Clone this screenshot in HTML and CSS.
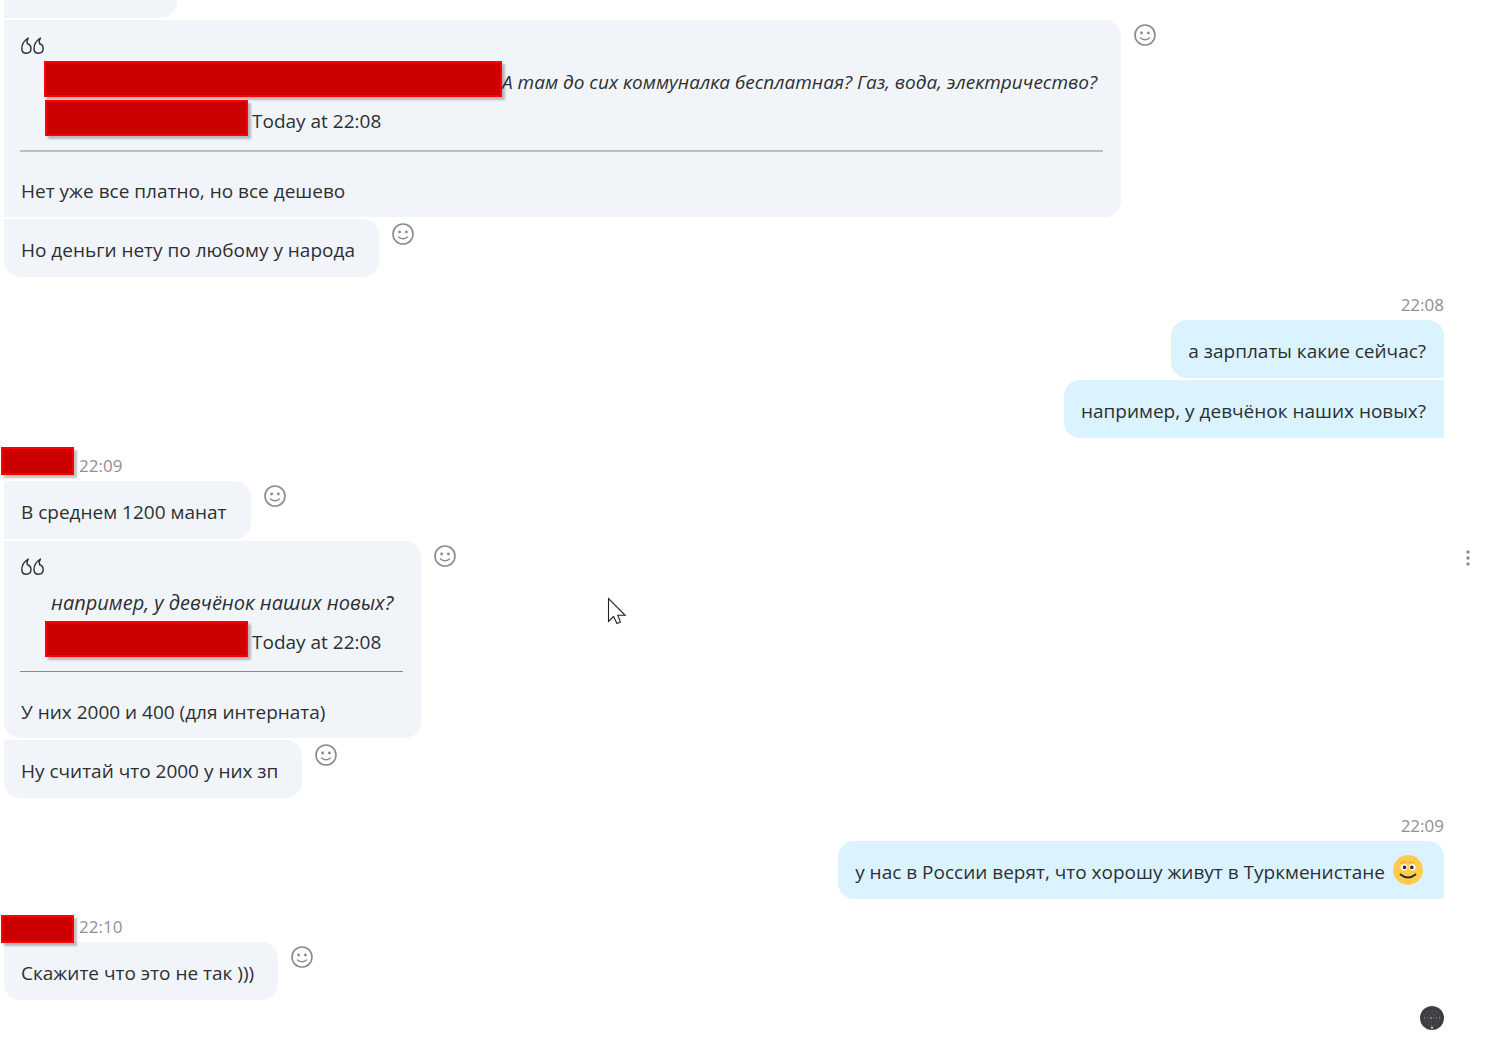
FILE: index.html
```html
<!DOCTYPE html>
<html lang="ru">

<head>
    <meta charset="UTF-8">
    <meta name="viewport" content="width=device-width, initial-scale=1.0">
    <title>Chat</title>
    <link rel="stylesheet" href="styles.css">
</head>

<body>
    <!-- Shared icons -->
    <svg class="sprite" aria-hidden="true">
        <symbol id="smile" viewBox="0 0 22 22">
            <circle cx="11" cy="11" r="10" fill="none" stroke="currentColor" stroke-width="1.6" />
            <circle cx="7.6" cy="9" r="1.4" fill="currentColor" />
            <circle cx="14.4" cy="9" r="1.4" fill="currentColor" />
            <path d="M6.5 14Q11 17.6 15.5 14" fill="none" stroke="currentColor" stroke-width="1.5" stroke-linecap="round" />
        </symbol>
        <symbol id="quote" viewBox="0 0 24 18">
            <g fill="none" stroke="currentColor" stroke-width="1.4" stroke-linejoin="round">
                <path d="M8.2 1C4.4 3.6 1.8 7.4 1.8 11.4C1.8 14.4 3.5 16.2 6.3 16.2C9.1 16.2 11 14.3 11 11.6C11 9.2 9.6 7.4 7.4 6.8C6.7 5 6.9 3 8.2 1Z" />
                <path d="M20.4 1C16.6 3.6 14 7.4 14 11.4C14 14.4 15.7 16.2 18.5 16.2C21.3 16.2 23.2 14.3 23.2 11.6C23.2 9.2 21.8 7.4 19.6 6.8C18.9 5 19.1 3 20.4 1Z" />
            </g>
        </symbol>
    </svg>

    <main class="chat">
        <div class="row">
            <div class="bubble bubble-cut"></div>
        </div>
        <div class="row">
            <div class="bubble has-quote">
                <svg class="quote-icon"><use href="#quote" /></svg>
                <blockquote>
                    <div class="quote-line"><span class="redacted redacted-long"></span><em>А там до сих коммуналка бесплатная? Газ, вода, электричество?</em></div>
                    <div class="quote-line"><span class="redacted redacted-author"></span><span class="quote-time">Today at 22:08</span></div>
                </blockquote>
                <hr>
                <p>Нет уже все платно, но все дешево</p>
            </div>
            <button class="react" aria-label="React"><svg><use href="#smile" /></svg></button>
        </div>
        <div class="row">
            <div class="bubble last">
                <p>Но деньги нету по любому у народа</p>
            </div>
            <button class="react" aria-label="React"><svg><use href="#smile" /></svg></button>
        </div>

        <div class="meta meta-out"><time>22:08</time></div>
        <div class="row row-out">
            <div class="bubble out first">
                <p>а зарплаты какие сейчас?</p>
            </div>
        </div>
        <div class="row row-out">
            <div class="bubble out">
                <p>например, у девчёнок наших новых?</p>
            </div>
        </div>

        <div class="meta"><span class="redacted redacted-name"></span><time>22:09</time></div>
        <div class="row">
            <div class="bubble">
                <p>В среднем 1200 манат</p>
            </div>
            <button class="react" aria-label="React"><svg><use href="#smile" /></svg></button>
        </div>
        <div class="row">
            <div class="bubble has-quote last">
                <svg class="quote-icon"><use href="#quote" /></svg>
                <blockquote>
                    <div class="quote-line"><em class="quote-text">например, у девчёнок наших новых?</em></div>
                    <div class="quote-line"><span class="redacted redacted-author"></span><span class="quote-time">Today at 22:08</span></div>
                </blockquote>
                <hr class="thin">
                <p>У них 2000 и 400 (для интерната)</p>
            </div>
            <button class="react" aria-label="React"><svg><use href="#smile" /></svg></button>
            <button class="more" aria-label="More options">
                <svg viewBox="0 0 4 16">
                    <circle cx="2" cy="2" r="1.7" />
                    <circle cx="2" cy="8" r="1.7" />
                    <circle cx="2" cy="14" r="1.7" />
                </svg>
            </button>
        </div>
        <div class="row">
            <div class="bubble last">
                <p>Ну считай что 2000 у них зп</p>
            </div>
            <button class="react" aria-label="React"><svg><use href="#smile" /></svg></button>
        </div>

        <div class="meta meta-out"><time>22:09</time></div>
        <div class="row row-out">
            <div class="bubble out first">
                <p>у нас в России верят, что хорошу живут в Туркменистане</p>
                <svg class="emoji" viewBox="0 0 30 30" role="img" aria-label="smile">
                    <circle cx="15" cy="15" r="15" fill="#ffcb4c" />
                    <path d="M8 8.5Q11 5.5 14 8M16 8Q19 5.5 22 8.5" fill="none" stroke="#e0a030" stroke-width="1.4" stroke-dasharray="2 1" />
                    <circle cx="11" cy="12.3" r="3.2" fill="#fff" />
                    <circle cx="19.3" cy="12.3" r="3.2" fill="#fff" />
                    <circle cx="11.5" cy="12.4" r="1.8" fill="#2a2a2a" />
                    <circle cx="18.8" cy="12.4" r="1.8" fill="#2a2a2a" />
                    <path d="M7.5 19.5Q15 25.5 22.5 19.5" fill="none" stroke="#2f281c" stroke-width="1.9" stroke-linecap="round" />
                    <path d="M14 27.5L17 26.5" stroke="#eda934" />
                </svg>
            </div>
        </div>

        <div class="meta"><span class="redacted redacted-name low"></span><time>22:10</time></div>
        <div class="row">
            <div class="bubble last">
                <p>Скажите что это не так )))</p>
            </div>
            <button class="react" aria-label="React"><svg><use href="#smile" /></svg></button>
        </div>

        <!-- Read receipt -->
        <svg class="seen" viewBox="0 0 24 24" role="img" aria-label="Seen">
            <circle cx="12" cy="12" r="12" fill="#3c3e3f" />
            <g fill="none" stroke="#777b7d" stroke-width="0.8" stroke-dasharray="1 2">
                <circle cx="12" cy="12" r="4" />
                <circle cx="12" cy="12" r="7.5" />
                <path d="M4 12H20" stroke="#9a9d9e" />
            </g>
            <circle cx="11" cy="12" r="1.2" fill="#777b7d" />
            <path d="M12 20.5V23" stroke="#d5d7d8" stroke-width="1.5" />
        </svg>
    </main>

    <svg class="cursor" viewBox="0 0 20 28" aria-hidden="true">
        <path d="M1.5 1.5V24.5L6.5 19.5L10 26.5L13.5 25L10.7 18.3H18.2Z" fill="#fff" stroke="#222" stroke-width="1.1" />
    </svg>
</body>

</html>
```

FILE: styles.css
```css
* {
    margin: 0;
    padding: 0;
    box-sizing: border-box;
}

body {
    position: relative;
    background-color: #fff;
    color: #2d2f33;
    font-family: "Open Sans", "Noto Sans", sans-serif;
    font-size: 19px;
    line-height: 28px;
}

button {
    border: none;
    background: none;
    color: #858c91;
    cursor: pointer;
}

button svg {
    display: block;
    width: 100%;
    height: 100%;
}

.sprite {
    display: none;
}

.chat {
    display: flex;
    flex-direction: column;
    gap: 2px;
    padding-left: 4px;
}

.row {
    display: flex;
    align-items: flex-start;
}

.row-out {
    justify-content: flex-end;
    padding-right: 65px;
}

/* Bubbles */
.bubble {
    padding: 17px 24px 13px 16px;
    background-color: #f1f5fa;
    border-radius: 0 16px 16px 0;
    white-space: nowrap;
}

.bubble p {
    padding-left: 1px;
}

.bubble.last {
    border-bottom-left-radius: 16px;
}

.bubble.out {
    display: flex;
    align-items: center;
    gap: 8px;
    padding-right: 18px;
    background-color: #dbf3ff;
    border-radius: 16px 0 0 16px;
}

.bubble.first {
    border-top-right-radius: 16px;
}

.bubble.has-quote {
    padding-right: 18px;
    padding-bottom: 12px;
}

.bubble-cut {
    width: 173px;
    height: 18px;
    padding: 0;
    border-top-right-radius: 0;
}

/* Quoted message */
.quote-icon {
    display: block;
    width: 24px;
    height: 18px;
    margin-bottom: 6px;
}

blockquote {
    display: flex;
    flex-direction: column;
    gap: 3px;
    padding: 0 6px 0 24px;
}

.quote-line {
    display: flex;
    align-items: center;
    height: 36px;
}

.quote-line em {
    padding-top: 5px;
}

.quote-line .quote-text {
    padding-left: 7px;
    padding-right: 4px;
    font-size: 20px;
}

.quote-time {
    padding: 5px 0 0 4px;
}

hr {
    height: 2px;
    margin: 14px 0 25px;
    border: none;
    background-color: #b9bec1;
}

hr.thin {
    height: 1px;
    margin-bottom: 26px;
    background-color: #858a92;
}

.redacted {
    flex-shrink: 0;
    border: 2px solid #f00;
    background-color: #c00;
    box-shadow: 3px 3px 2px rgba(0, 0, 0, 0.25);
}

.redacted-long {
    width: 458px;
    height: 36px;
}

.redacted-author {
    width: 203px;
    height: 36px;
    margin-left: 1px;
}

.redacted-name {
    z-index: 1;
    width: 73px;
    height: 28px;
    margin: 7px 0 0 -3px;
}

.redacted-name.low {
    margin-top: 14px;
}

/* Name and time above a group */
.meta {
    display: flex;
    align-items: flex-start;
    gap: 5px;
    height: 39px;
    color: #8b9196;
    font-size: 17px;
}

.meta time {
    padding-top: 12px;
}

.meta-out {
    justify-content: flex-end;
    padding-right: 65px;
}

.react {
    flex-shrink: 0;
    width: 22px;
    height: 22px;
    margin: 4px 0 0 13px;
}

.more {
    width: 4px;
    height: 16px;
    margin: 9px 39px 0 auto;
    fill: currentColor;
}

.emoji {
    width: 30px;
    height: 30px;
    margin: -4px 3px 0 0;
}

.seen {
    align-self: flex-end;
    width: 24px;
    height: 24px;
    margin: 4px 65px 16px 0;
}

.cursor {
    position: absolute;
    top: 597px;
    left: 607px;
    width: 20px;
    height: 28px;
}
```
